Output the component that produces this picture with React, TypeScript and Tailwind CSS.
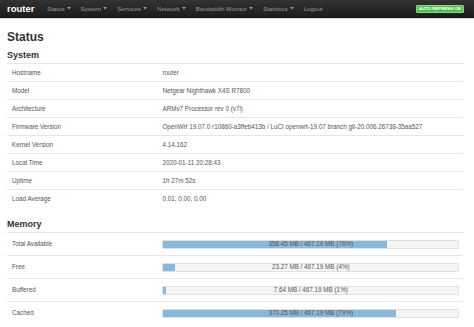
import React from "react";

const navItems = [
  { label: "Status", caret: true },
  { label: "System", caret: true },
  { label: "Services", caret: true },
  { label: "Network", caret: true },
  { label: "Bandwidth Monitor", caret: true },
  { label: "Statistics", caret: true },
  { label: "Logout", caret: false },
];

const sys = [
  ["Hostname", "router"],
  ["Model", "Netgear Nighthawk X4S R7800"],
  ["Architecture", "ARMv7 Processor rev 0 (v7l)"],
  ["Firmware Version", "OpenWrt 19.07.0 r10860-a3ffeb413b / LuCI openwrt-19.07 branch git-20.006.26738-35aa527"],
  ["Kernel Version", "4.14.162"],
  ["Local Time", "2020-01-11 20:28:43"],
  ["Uptime", "1h 27m 52s"],
  ["Load Average", "0.01, 0.00, 0.00"],
];

const mem = [
  ["Total Available", "358.45 MB / 467.19 MB (76%)", 76],
  ["Free", "23.27 MB / 467.19 MB (4%)", 4],
  ["Buffered", "7.64 MB / 467.19 MB (1%)", 1],
  ["Cached", "370.25 MB / 467.19 MB (79%)", 79],
] as const;

function Caret() {
  return (
    <svg width="4" height="3" viewBox="0 0 4 3" className="ml-[2px]">
      <polygon points="0,0 4,0 2,2.5" fill="#999" />
    </svg>
  );
}

export default function App() {
  return (
    <div
      className="w-[474px] h-[327px] bg-white overflow-hidden"
      style={{ fontFamily: '"Liberation Sans", Arial, sans-serif' }}
    >
      <div className="h-[18px] bg-gradient-to-b from-[#333333] to-[#1b1b1b] flex items-center pl-[7px] pr-[10px] shadow-[0_1px_1px_rgba(0,0,0,0.15)]">
        <div className="text-white text-[9.5px] font-bold leading-none w-[40px]">router</div>
        <div className="flex items-center">
          {navItems.map((n) => (
            <div
              key={n.label}
              className="flex items-center text-[#9a9a9a] text-[6.2px] leading-none pr-[10px]"
            >
              {n.label}
              {n.caret && <Caret />}
            </div>
          ))}
        </div>
        <div className="ml-auto h-[8px] px-[2px] flex items-center bg-[#4fbf4f] border border-[#7fdc7f] rounded-[1px] text-white font-bold text-[4.4px] leading-none">
          AUTO REFRESH ON
        </div>
      </div>

      <div className="px-[7px] pr-[11px]">
        <h2 className="mt-[12px] text-[12px] leading-[14px] font-bold text-[#333]">Status</h2>
        <h3 className="mt-[6px] text-[9px] leading-[11px] font-bold text-[#333]">System</h3>
        <div className="mt-[2px]">
          {sys.map(([k, v]) => (
            <div key={k} className="flex h-[18px] items-center border-t border-[#e6e6e6] text-[6.3px] text-[#555]">
              <div className="w-[33%] pl-[5px]">{k}</div>
              <div className="flex-1 pl-[5px] whitespace-nowrap">{v}</div>
            </div>
          ))}
        </div>

        <h3 className="mt-[12px] text-[9px] leading-[11px] font-bold text-[#333]">Memory</h3>
        <div className="mt-[2px]">
          {mem.map(([k, v, p]) => (
            <div key={k} className="flex h-[23px] items-center border-t border-[#e6e6e6] text-[6.3px] text-[#555]">
              <div className="w-[33%] pl-[5px]">{k}</div>
              <div className="flex-1 pl-[5px] pr-[4px]">
                <div className="relative h-[9px] bg-[#f5f5f5] border border-[#e0e0e0] rounded-[1px] overflow-hidden">
                  <div className="absolute left-0 top-0 bottom-0 bg-[#88b9dd]" style={{ width: `${p}%` }} />
                  <div className="absolute inset-0 flex items-center justify-center text-[6.3px] text-[#555] leading-none">
                    {v}
                  </div>
                </div>
              </div>
            </div>
          ))}
        </div>
      </div>
    </div>
  );
}
